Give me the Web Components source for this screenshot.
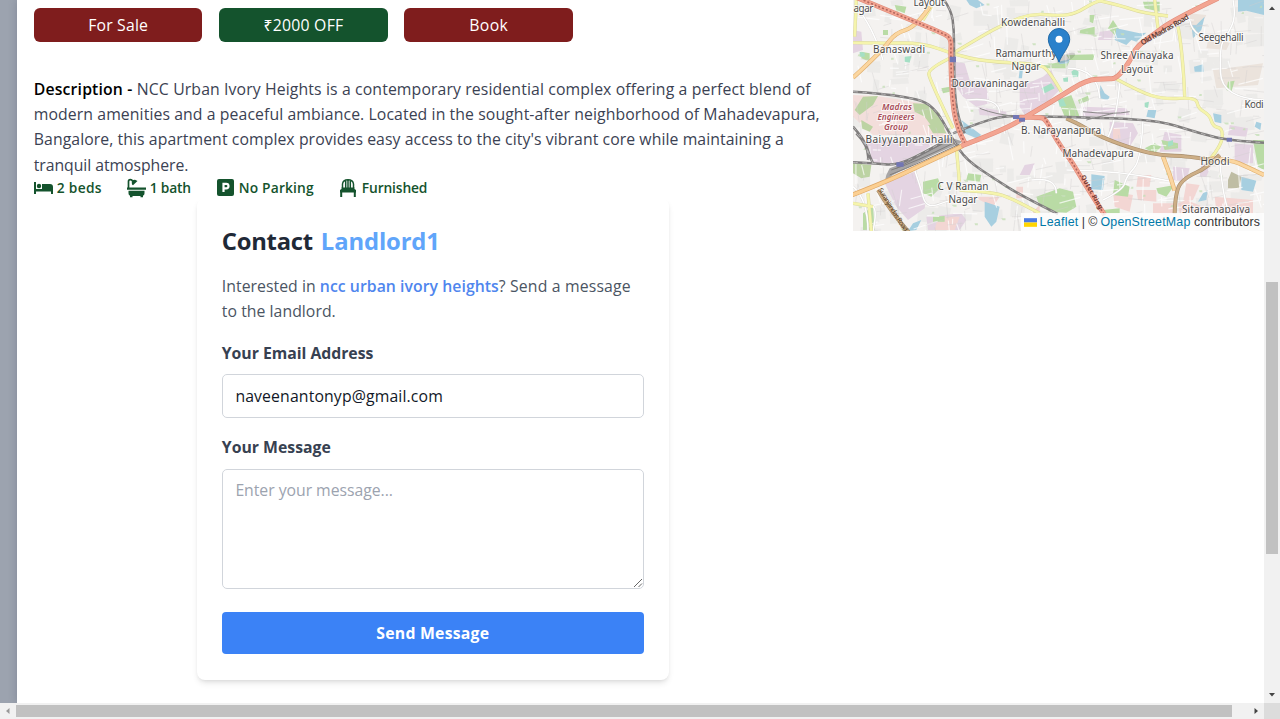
<!DOCTYPE html>
<html lang="en">
<head>
<meta charset="utf-8">
<title>Listing</title>
<style>
html,body{margin:0;height:100%;overflow:hidden;background:#fff}
body{font-family:"Open Sans","Noto Sans",sans-serif;font-size:15.8px;color:#334155}
</style>
</head>
<body>
<listing-page></listing-page>
<script>
const define = (name, html, after) => {
  const t = document.createElement('template');
  t.innerHTML = html;
  customElements.define(name, class extends HTMLElement {
    constructor() {
      super();
      this.attachShadow({mode: 'open'}).append(t.content.cloneNode(true));
    }
    connectedCallback() { if (after) after.call(this, this.shadowRoot); }
  });
};

/* A single line of text tracked to a given measure. */
define('fit-text', `<style>
:host{display:inline-block;white-space:pre;vertical-align:top}
span{display:inline-block}
</style><span><slot></slot></span>`, function (root) {
  const w = +this.getAttribute('w'), s = root.querySelector('span');
  s.style.letterSpacing = '0px';
  const n = this.textContent.length;
  s.style.letterSpacing = ((w - s.getBoundingClientRect().width) / n).toFixed(4) + 'px';
  this.style.width = w + 'px';
});

define('tag-button', `<style>
:host{display:flex;align-items:center;justify-content:center;width:168.7px;height:33.5px;border-radius:6px;background:#7f1d1d;color:#fff;line-height:24px;box-sizing:border-box}
:host([tone=green]){background:#14532d}
</style><slot></slot>`);

define('feature-item', `<style>
:host{display:flex;align-items:center;gap:4px;color:#14532d;font-size:13.8px;font-weight:600;line-height:20px}
::slotted(svg){display:block;flex:none}
</style><slot></slot>`);

define('form-field', `<style>
:host{display:block}
.label{display:block;font-weight:700;color:#374151;line-height:25.3px;height:25.3px}
.box{position:relative;margin-top:8.4px;box-sizing:border-box;height:43.5px;border:1px solid #d1d5db;border-radius:5px;padding:8.6px 12.6px;line-height:25.3px;color:#111827}
:host([multi]) .box{height:120px;color:#9ca3af}
svg{display:none;position:absolute;right:0;bottom:0}
:host([multi]) svg{display:block}
</style><div class="label"><slot name="label"></slot></div>
<div class="box"><slot></slot><svg width="10" height="10" viewBox="0 0 10 10" stroke="#666" stroke-width="1"><path d="M1 9 9 1M5.5 9 9 5.5"/></svg></div>`);

define('contact-card', `<style>
:host{display:block;box-sizing:border-box;width:472px;height:482.5px;margin-left:163px;padding:24px 25px;background:#fff;border-radius:8px;box-shadow:0 4px 6px -1px rgba(0,0,0,.1),0 2px 4px -2px rgba(0,0,0,.1);clip-path:inset(3px -12px -14px -12px)}
h2{margin:0;font-size:23.8px;line-height:38px;font-weight:700;color:#1f2937;display:flex;gap:8px}
h2 .n{color:#60a5fa}
.p{margin:14px 0 0;color:#4b5563;line-height:25.4px}
.p b{font-weight:600;color:#4f86ee}
.row{display:flex}
form-field{margin-top:16.400px}
form-field[multi]{margin-top:17.2px}
.send{display:flex;align-items:center;justify-content:center;margin-top:23px;height:42.5px;border-radius:4px;background:#3b82f6;color:#fff;font-weight:700}
</style>
<h2><fit-text w="91">Contact</fit-text><fit-text class="n" w="119">Landlord1</fit-text></h2>
<div class="p"><div class="row"><fit-text w="98">Interested in </fit-text><b><fit-text w="179">ncc urban ivory heights</fit-text></b><fit-text w="132">? Send a message</fit-text></div>
<fit-text w="114">to the landlord.</fit-text></div>
<form-field><fit-text slot="label" w="151.500">Your Email Address</fit-text><fit-text w="207.500">naveenantonyp@gmail.com</fit-text></form-field>
<form-field multi><fit-text slot="label" w="109">Your Message</fit-text><fit-text w="157.5">Enter your message...</fit-text></form-field>
<div class="send"><fit-text w="113">Send Message</fit-text></div>`);

define('area-map', `<style>
:host{display:block;position:relative;width:411px;height:231px;overflow:hidden;background:#f4f2f0}
svg.m{display:block}
#tiles{filter:blur(.35px)}
.lb text{font-family:"Noto Sans",sans-serif;font-size:10px;fill:#4a4a4a;stroke:#fff;stroke-opacity:.7;stroke-width:2px;paint-order:stroke;text-anchor:middle}
.lb .army text{font-size:8.6px;fill:#a84d59;font-style:italic;font-weight:600}
.attr{position:absolute;right:0;bottom:0;height:18px;display:flex;align-items:center;background:rgba(255,255,255,.8);padding:0 4px 0 3px;font:12.4px/18px "Liberation Sans",Arial,sans-serif;color:#333}
.attr i{color:#0078a8;font-style:normal}
.attr svg{margin-right:3px}
</style>
<svg class="m" width="411" height="231" viewBox="853 0 411 231" fill="none">
<g id="tiles" transform="translate(853 0) scale(.33333)" stroke-linejoin="round"></g>
<g class="lb">
 <text x="863.500" y="12" textLength="20">agar</text><text x="929" y="6" textLength="31">Layout</text>
 <text x="1033" y="26" textLength="64">Kowdenahalli</text><text x="899" y="53" textLength="52">Banaswadi</text>
 <text x="1026" y="57" textLength="61">Ramamurthy</text><text x="1026" y="70" textLength="29">Nagar</text>
 <text x="990" y="87" textLength="77">Dooravaninagar</text><text x="1137" y="59" textLength="73">Shree Vinayaka</text><text x="1137" y="73" textLength="32">Layout</text>
 <text x="1221" y="41" textLength="45">Seegehalli</text><text x="1254" y="108" textLength="19">Kodi</text>
 <g class="army"><text x="897" y="110" textLength="30">Madras</text><text x="896" y="120" textLength="37">Engineers</text><text x="896" y="130" textLength="24">Group</text></g>
 <text x="909" y="143" textLength="87">Baiyyappanahalli</text><text x="1061" y="134" textLength="80">B. Narayanapura</text>
 <text x="1098" y="157" textLength="71">Mahadevapura</text><text x="1215" y="165" textLength="29">Hoodi</text>
 <text x="963" y="190" textLength="51">C V Raman</text><text x="963" y="203" textLength="29">Nagar</text><text x="1216" y="213" textLength="68">Sitaramapalya</text>
 <text transform="translate(1166 32) rotate(-30)" textLength="54" style="font-size:7.5px;font-weight:600;fill:#5d3c35;stroke:none">Old Madras Road</text>
 <text transform="translate(891 211) rotate(58)" textLength="50" style="font-size:7px;fill:#5b4529;stroke:none">Suranjandas Road</text>
 <text transform="translate(1090 193) rotate(61)" textLength="38" style="font-size:6.5px;font-weight:600;fill:#6b342f;stroke:none">Outer Ring</text>
</g>
<ellipse cx="1066" cy="58" rx="10" ry="3.5" fill="#000" opacity=".13" transform="rotate(-25 1066 58)"/>
<path d="M1059 62C1056 54 1048.3 47 1048.3 39.200a10.700 10.700 0 0 1 21.400 0C1069.700 47 1062 54 1059 62Z" fill="#2a81cb" stroke="#226ba8" stroke-width="1"/><circle cx="1059" cy="39.300" r="3.500" fill="#fff"/>
</svg>
<div class="attr"><svg width="13" height="9" viewBox="0 0 12 8"><path fill="#4C7BE1" d="M0 0h12v4H0z"/><path fill="#FFD500" d="M0 4h12v4H0z"/></svg><i><fit-text w="39">Leaflet</fit-text></i><fit-text w="22"> | © </fit-text><i><fit-text w="90">OpenStreetMap</fit-text></i><fit-text w="69.500"> contributors</fit-text></div>`, function (root) {
  const NS = 'http://www.w3.org/2000/svg';
  const tiles = root.getElementById('tiles');
  let seed = 19;
  const r = () => (seed = (seed * 16807) % 2147483647) / 2147483647;
  const add = attrs => {
    const p = document.createElementNS(NS, 'path');
    for (const k in attrs) p.setAttribute(k, attrs[k]);
    tiles.append(p);
  };
  /* Rounds a list of vertices into a smooth line. */
  const smooth = str => {
    const n = str.trim().split(/[ ,]+/).map(Number), p = [];
    for (let i = 0; i < n.length; i += 2) p.push([n[i], n[i + 1]]);
    let d = `M${p[0]}`;
    for (let i = 1; i < p.length - 1; i++) {
      const last = i === p.length - 2;
      const e = last ? p[i + 1] : [(p[i][0] + p[i + 1][0]) / 2, (p[i][1] + p[i + 1][1]) / 2];
      d += `Q${p[i]} ${e}`;
    }
    if (p.length === 2) d += `L${p[1]}`;
    return d;
  };
  const road = (lines, ...strokes) => {
    const d = lines.map(smooth).join('');
    strokes.forEach(([stroke, width, dash]) => add({stroke, 'stroke-width': width, d, ...(dash ? {'stroke-dasharray': dash} : {})}));
  };

  let haze = '';
  for (let i = 0; i < 170; i++) {
    const x = r() * 1233, y = r() * 693, w = 15 + r() * 50, h = 12 + r() * 36, s = r() * 15 - 6;
    haze += `M${x} ${y}l${w} ${s}l${-s} ${h}l${-w} ${-s}z`;
  }
  add({fill: '#e6e5e4', opacity: '.55', d: haze});

  const land = [
    ['#f3dedb', 'M0 285 70 288 150 300 220 312 260 350 285 410 200 405 60 405 0 350Z'],
    ['#bcd3a3', 'M30 290 75 288 60 315 20 345 5 330ZM180 310 225 312 260 340 275 385 240 385 215 350 185 335ZM25 360 60 380 50 395 25 385ZM225 375 265 370 280 400 240 400ZM0 490 55 495 50 530 25 535 0 520Z'],
    ['#e4d4e2', 'M40 420 250 425 215 450 140 490 60 490 45 455ZM95 550 185 515 205 570 218 605 215 625 165 660 130 620ZM305 185 335 190 350 240 400 260 410 310 370 320 330 290 310 260ZM500 260 570 230 595 210 620 270 590 300 515 345 500 320ZM770 365 840 370 855 400 830 440 770 425ZM935 395 985 405 985 455 920 455ZM690 320 820 325 830 345 690 350ZM220 650 325 640 340 660 320 690 225 690ZM960 500 1010 505 1000 545 960 540ZM1045 490 1075 495 1060 530 1040 530ZM740 95 785 90 775 120 735 120ZM0 90 25 95 30 150 0 160ZM1130 375 1185 385 1180 410 1125 405ZM515 495 545 490 530 525 500 525ZM375 320 460 335 460 350 380 345ZM1145 430 1200 435 1200 490 1145 490Z'],
    ['#f3d6d3', 'M780 385 800 385 803 415 780 418ZM855 525 895 525 890 560 850 560ZM850 570 910 570 910 605 855 600ZM900 610 965 610 965 640 900 640ZM255 650 320 650 305 690 245 690ZM1000 550 1040 555 1020 600 990 605ZM1085 590 1200 600 1200 640 1090 635ZM490 560 510 560 510 595 490 595ZM370 590 440 590 420 620 380 600ZM780 575 840 585 830 635 785 620ZM975 610 1000 600 1050 620 1045 640 980 640ZM535 640 560 615 560 640Z'],
    ['#ebe3dc', 'M1080 210 1230 190 1215 255 1090 265ZM1010 40 1060 45 1040 85 1010 90ZM1070 100 1130 130 1120 150 1060 145Z'],
    ['#b9dba5', 'M550 590 620 565 660 575 670 620 640 638 590 635 555 605ZM210 545 255 535 265 560 235 590 210 580ZM870 5 920 5 920 35 875 25ZM640 165 725 163 720 180 650 180ZM570 195 650 182 640 205 580 205ZM710 45 725 45 720 70 710 65ZM682 90 725 80 725 105 680 100ZM615 300 655 285 680 350 635 350ZM675 300 705 287 710 300 680 312ZM785 540 830 560 825 590 780 585ZM910 565 965 555 940 590 915 580ZM1200 420 1233 420 1233 510 1215 500ZM925 420 975 430 975 445 935 450ZM780 60 800 90 785 105 765 85ZM90 90 105 90 105 105 90 105ZM125 15 160 20 155 40 130 30ZM25 155 50 160 50 185 25 175ZM345 520 385 525 380 545 340 540ZM240 650 275 648 275 665 240 665ZM1125 245 1145 242 1135 275 1120 270ZM265 265 290 260 290 275 270 280ZM30 640 60 620 65 690 30 690ZM875 445 905 430 925 440 905 460ZM750 630 800 625 800 640 760 640Z'],
    ['#a5dfc5', 'M565 265 595 250 605 265 575 280ZM630 235 645 232 645 245 632 245ZM655 215 665 207 678 215 675 230 660 232ZM615 298 630 295 640 318 620 320ZM155 170 175 168 170 188 155 185ZM945 425 960 420 960 435 945 440ZM875 308 888 305 885 325 875 320ZM20 155 35 158 35 170 20 170Z'],
    ['#a7cfe0', 'M340 0 375 0 395 15 370 25 350 15ZM790 85 860 100 880 98 850 125 835 120 820 135 785 120ZM1155 0 1233 0 1233 45 1180 32 1155 35ZM395 605 440 620 430 665 415 680 395 650ZM715 523 755 528 750 570 715 568ZM1165 530 1210 542 1200 575 1165 570ZM1023 200 1050 193 1052 215 1025 215ZM325 360 345 375 385 405 370 415 335 400ZM1015 75 1030 75 1055 50 1045 90 1020 115ZM742 255 755 280 770 290 765 300 740 295ZM1050 580 1065 570 1060 600 1035 605ZM615 185 650 178 645 190 620 192ZM885 330 910 330 905 355 880 350ZM1080 340 1105 345 1105 370 1085 365ZM205 660 180 670 165 693 190 690ZM500 210 510 205 507 235 497 235ZM1210 365 1225 370 1222 390 1205 380Z'],
    ['#bfbda4', 'M1135 515 1165 530 1158 565 1125 565 1125 540Z']
  ];
  land.forEach(([fill, d]) => add({fill, d}));

  let a = '', b = '', c = '';
  for (let i = 0; i < 620; i++) {
    const x = r() * 1233, y = r() * 693, t = (r() < .5 ? 0 : 1.57) + (r() - .5) * .5 - .1, l = 16 + r() * 60;
    const seg = `M${x.toFixed(1)} ${y.toFixed(1)}l${(Math.cos(t) * l).toFixed(1)} ${(Math.sin(t) * l).toFixed(1)}`;
    if (i % 2) a += seg; else b += seg;
  }
  for (let i = 0; i < 70; i++) c += `M${(r() * 1233).toFixed(1)} ${(r() * 693).toFixed(1)}h${(4 + r() * 12).toFixed(1)}v6h-8z`;
  add({stroke: '#fff', 'stroke-width': 3.5, opacity: '.7', d: a});
  add({stroke: '#d0cecd', 'stroke-width': 1.8, opacity: '.65', d: b});
  add({fill: '#c6dfb8', opacity: '.8', d: c});

  road(['10,20 60,80 90,180', '185,510 205,570 215,610 240,620 290,600 320,600', '645,205 735,205 740,295', '1140,0 1150,50 1120,110 1100,140 1105,295 1233,300', '535,540 610,530 610,580', '870,360 865,480 820,530 810,570 750,600', '640,510 800,510 960,545', '1100,480 1110,600 1130,640', '340,300 440,290 440,340', '1010,60 1020,120 1110,120', '40,620 80,600 60,693', '0,560 45,600 45,693', '800,250 790,370 760,420'],
    ['#d8d6d4', 6.5], ['#fff', 4.5]);
  road(['0,128 70,130 210,128 300,163 400,185 560,192 590,215 625,275', '295,163 380,112 460,68 540,40 620,48 670,40 725,5 750,0', '730,0 800,15 870,40 945,48', '905,0 915,85', '975,80 990,160 995,290', '790,237 860,275 930,298 1030,292 1035,325 1070,345 1080,380 1110,385 1105,440 1060,490', '300,170 225,205 230,240 300,385', '310,445 318,520 320,570', '320,570 400,575 470,590 560,640', '45,580 50,640 55,693', '0,610 60,620', '235,20 210,60', '10,0 5,110'],
    ['#d9d69c', 10], ['#f5f4ac', 7.5]);
  road(['0,233 90,150 125,100 190,80 230,20', '930,470 950,520 965,572', '1075,475 1135,480 1180,500 1233,525'], ['#dfae6d', 13], ['#fbd6a0', 9.5]);
  road(['640,355 675,370 740,410 850,450 930,467 1000,468 1080,480', '965,640 967,570 1000,530 1060,505 1100,465', '75,570 110,630 170,700'], ['#a88e6d', 12], ['#cdae86', 8]);
  add({fill: '#a7a5a5', d: 'M100 525 110 505 160 485 300 415 330 425 240 465 120 525 95 545Z'});
  road(['115,510 180,490 310,425', '110,525 200,490 320,432', '130,505 300,415'], ['#7e7c7c', 3]);
  const rail = ['270,-5 295,30 303,90 303,160 305,290 320,370 335,400', '0,275 80,280 160,292 220,305 260,345 300,420 340,480 430,540 510,590 615,642', '0,380 35,420 50,470 60,490', '0,487 60,490 130,496 200,465 290,415', '10,400 50,440 45,480', '300,400 360,375 440,350 500,348 700,352 850,358 940,368 1040,400 1130,422 1233,428'];
  road(rail, ['#7f7d7d', 7.5], ['#b9b7b7', 3, '14 14']);
  road(['380,325 430,345 500,350', '690,335 780,345 830,335', '700,360 780,340'], ['#8b8989', 3]);
  road(['-10,588 100,545 220,488 330,437'], ['#dfa765', 14], ['#fbcf92', 10]);
  road(['325,438 450,390 520,350 620,290 700,240 760,236 790,237 830,185 850,140 900,105 960,60 1095,-5', '500,352 560,350 580,360 610,420 660,490 700,560 755,645', '10,-8 150,50 270,100 295,115 293,160 297,290 310,380 335,428'],
    ['#e08b79', 15], ['#f3a592', 11.5]);
  road(['20,-4 150,50 270,100 295,115 293,160 297,290 310,380 335,428', '575,352 585,370 610,420 660,490 700,560 755,645'], ['#b3665d', 5, '6 6']);
  add({fill: '#7276b4', d: 'M290 170h19v17h-19zM130 487h22v13h-22zM480 345h18v12h-18zM498 353h18v12h-18zM1121 413h16v12h-16z'});
});

define('scroll-bar', `<style>
:host{display:flex;align-items:center;background:#f1f1f1;box-sizing:border-box}
:host([axis=y]){flex-direction:column;width:16px;padding-top:3px}
:host([axis=x]){height:16px;padding-left:4px}
svg{flex:none;display:block}
.t{background:#c1c1c1;flex:none}
:host([axis=y]) .t{width:12px;height:272.5px;margin-top:270.5px}
:host([axis=x]) .t{height:12px;width:1216px;margin-left:4px}
.e{margin-left:20px}
:host([axis=y]) .e{margin:137px 0 0}
</style><svg class="s" width="8" height="8"><path/></svg><div class="t"></div><svg class="e" width="8" height="8"><path/></svg>`, function (root) {
  const [s, e] = root.querySelectorAll('path');
  const y = this.getAttribute('axis') === 'y';
  s.setAttribute('d', y ? 'M1 7 4 3.500 7 7z' : 'M5.500 1 2 4l3.500 3z');
  e.setAttribute('d', y ? 'M1 2h6L4 5.500z' : 'M2.500 1 6 4 2.500 7z');
  s.setAttribute('fill', y ? '#444' : '#999');
  e.setAttribute('fill', '#444');
});

define('listing-page', `<style>
:host{display:grid;grid-template-columns:1264px 16px;grid-template-rows:703px 16px;width:1280px;height:719px;overflow:hidden}
.view{display:flex;background:#9ca3af;overflow:hidden;padding-left:17px}
main{flex:1;display:flex;background:#fff;box-shadow:0 0 8px rgba(60,70,90,.28)}
.col{width:836px;box-sizing:border-box;padding:8.300px 0 0 16.800px}
.tags{display:flex;gap:16.600px}
.desc{margin-top:34.800px;line-height:25.350px;color:#3b4253}
.desc div{height:25.350px;display:flex}
.desc b{font-weight:600;color:#000}
.feats{display:flex;height:20px;margin-top:-.4px}
.corner{background:#dcdcdc}
</style>
<div class="view"><main>
<div class="col">
 <div class="tags"><tag-button><fit-text w="60">For Sale</fit-text></tag-button><tag-button tone="green"><fit-text w="80">₹2000 OFF</fit-text></tag-button><tag-button><fit-text w="39">Book</fit-text></tag-button></div>
 <div class="desc">
  <div><b><fit-text w="103">Description - </fit-text></b><fit-text w="674">NCC Urban Ivory Heights is a contemporary residential complex offering a perfect blend of</fit-text></div>
  <div><fit-text w="786">modern amenities and a peaceful ambiance. Located in the sought-after neighborhood of Mahadevapura,</fit-text></div>
  <div><fit-text w="750">Bangalore, this apartment complex provides easy access to the city's vibrant core while maintaining a</fit-text></div>
  <div><fit-text w="154.500">tranquil atmosphere.</fit-text></div>
 </div>
 <div class="feats">
  <feature-item style="width:93px"><svg width="19" height="14" viewBox="0 0 19 14" fill="currentColor"><path d="M0 1h2v7h6V3h8a3 3 0 0 1 3 3v7h-2v-2.500H2V13H0z"/><circle cx="5" cy="5" r="2.200"/></svg><fit-text w="45">2 beds</fit-text></feature-item>
  <feature-item style="width:90px;gap:3px"><svg width="20" height="20" viewBox="0 0 20 20" fill="currentColor"><path d="M0 9.500h19v2.300H0zM1.500 12.800h16v2.500a2.500 2.500 0 0 1-1.500 2.500V19.300h-2.500V18h-8v1.300H3V17.800a2.500 2.500 0 0 1-1.500-2.500z"/><path d="M1.500 10V3.500Q1.500 1.700 3.300 1.700T5.500 3.200" fill="none" stroke="currentColor" stroke-width="1.700"/><path d="M5 6.500Q3.800 2 8 1.800L10.500 3 6 7.200z"/></svg><fit-text w="41">1 bath</fit-text></feature-item>
  <feature-item style="width:122px;gap:5px"><svg width="17" height="17" viewBox="0 0 17 17"><rect width="17" height="17" rx="2" fill="currentColor"/><path d="M6.500 13V4.800h2.700a2.300 2.300 0 0 1 0 4.600H6.500" fill="none" stroke="#fff" stroke-width="2.200"/></svg><fit-text w="75">No Parking</fit-text></feature-item>
  <feature-item style="gap:5px"><svg width="18" height="20" viewBox="0 0 18 20" fill="none" stroke="currentColor" stroke-width="1.500"><path d="M3.500 10V6Q4 1.700 9 1.700T14.500 6V10M6.700 10V3M9 10V2M11.300 10V3"/><path d="M2.500 9.500h13v1.500l1.500 1v2.500H1V12l1.500-1z" fill="currentColor" stroke="none"/><path d="M2.200 14V19M15.800 14V19" stroke-width="2"/></svg><fit-text w="65.500">Furnished</fit-text></feature-item>
 </div>
 <contact-card></contact-card>
</div>
<area-map></area-map>
</main></div>
<scroll-bar axis="y"></scroll-bar>
<scroll-bar axis="x"></scroll-bar>
<div class="corner"></div>`);
</script>
</body>
</html>
